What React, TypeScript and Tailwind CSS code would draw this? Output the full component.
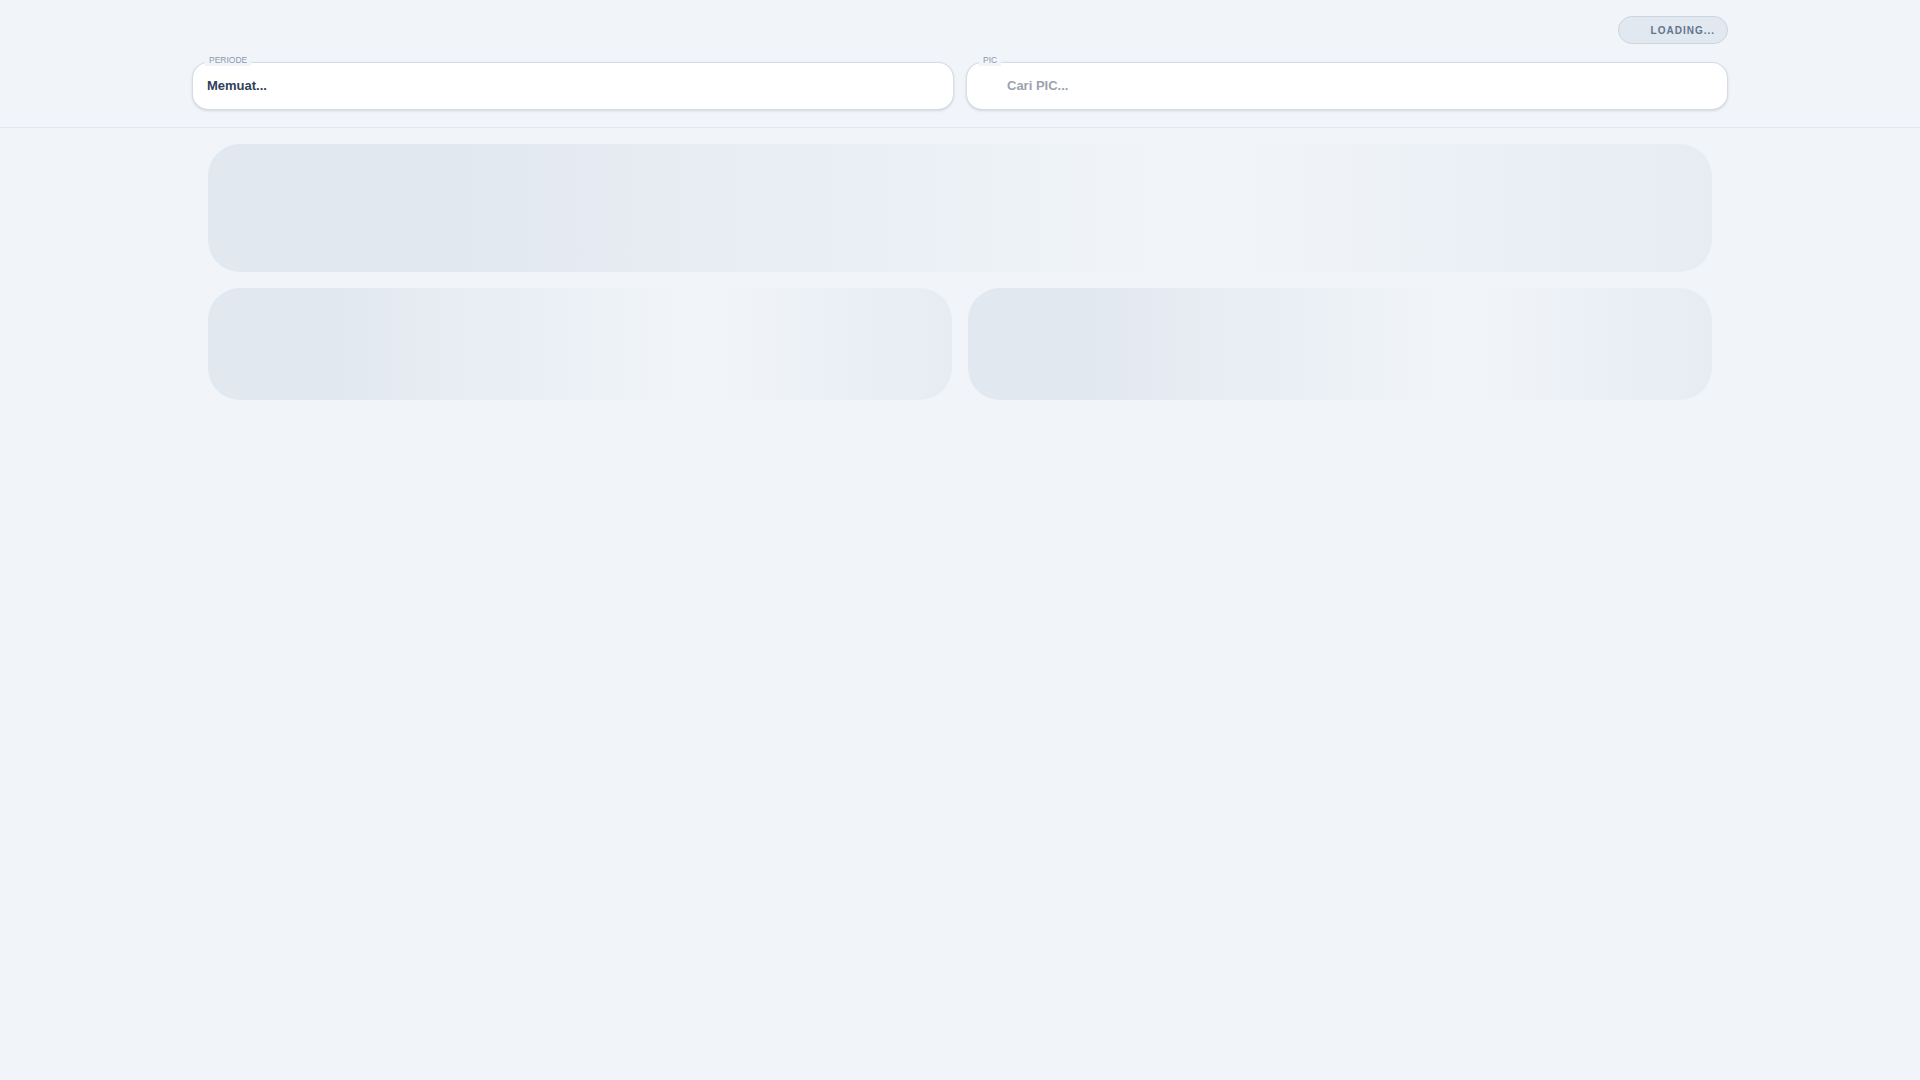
import React from "react";

const shimmer =
  "bg-[linear-gradient(90deg,#e2e8f0_0%,#e2e8f0_15%,#f1f5f9_66%,#e7ecf3_100%)]";

function Field({ label, children, indent }: { label: string; children: React.ReactNode; indent?: boolean }) {
  return (
    <div className="relative h-12 rounded-2xl border border-slate-300/80 bg-white shadow-sm">
      <span className="absolute -top-[9px] left-3 bg-[#f1f5f9] px-1 text-[8.5px] leading-[12px] uppercase text-[#8c98ac]">
        {label}
      </span>
      <div className={`flex h-full items-center ${indent ? "pl-10" : "pl-[14px]"}`}>{children}</div>
    </div>
  );
}

export default function App() {
  return (
    <div className="min-h-screen bg-[#f1f5f9] font-['Liberation_Sans',Arial,sans-serif]">
      <header className="border-b border-slate-200 pt-4 pb-[17px]">
        <div className="mx-auto max-w-[1536px]">
          <div className="flex justify-end">
            <div className="flex h-7 items-center gap-2 rounded-full border border-slate-300 bg-slate-200 px-3">
              <span className="h-3 w-3" />
              <span className="text-[10px] font-bold tracking-widest text-slate-500">LOADING...</span>
            </div>
          </div>
          <div className="mt-[18px] grid grid-cols-2 gap-3">
            <Field label="Periode">
              <span className="text-[13px] font-bold text-slate-700">Memuat...</span>
            </Field>
            <Field label="PIC" indent>
              <span className="text-[13px] font-bold text-[#9ca3af]">Cari PIC...</span>
            </Field>
          </div>
        </div>
      </header>

      <main className="mx-auto max-w-[1536px] px-4 pt-4">
        <div className="flex flex-col gap-4">
          <div className={`h-32 rounded-[32px] ${shimmer}`} />
          <div className="grid grid-cols-2 gap-4">
            <div className={`h-28 rounded-[32px] ${shimmer}`} />
            <div className={`h-28 rounded-[32px] ${shimmer}`} />
          </div>
        </div>
      </main>
    </div>
  );
}
